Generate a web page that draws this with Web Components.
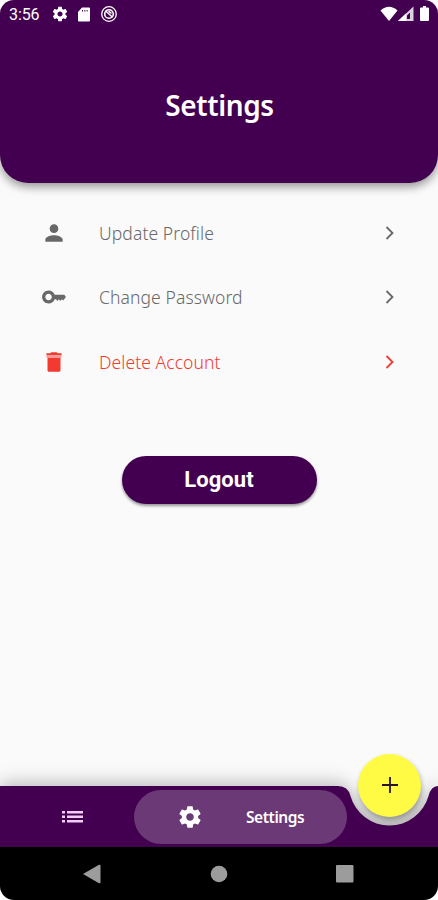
<!DOCTYPE html>
<html lang="en">
<head>
<meta charset="UTF-8">
<meta name="viewport" content="width=device-width, initial-scale=1.0">
<title>Settings</title>
<style>
  body {
    margin: 0;
    background: #fff;
  }
</style>
</head>
<body>
<phone-screen>
  <page-header slot="top">Settings</page-header>

  <settings-row icon="person" style="--spacing: 0.1px">Update Profile</settings-row>
  <settings-row icon="key" style="--spacing: 0.1px">Change Password</settings-row>
  <settings-row icon="trash" danger style="--spacing: 0.08px">Delete Account</settings-row>
  <pill-button>Logout</pill-button>

  <bottom-nav slot="bottom">Settings</bottom-nav>
  <system-nav slot="bottom"></system-nav>
</phone-screen>

<script>
const GEAR = 'M19.43 12.98c.04-.32.07-.64.07-.98s-.03-.66-.07-.98l2.11-1.65c.19-.15.24-.42.12-.64l-2-3.46c-.12-.22-.39-.3-.61-.22l-2.49 1c-.52-.4-1.08-.73-1.69-.98l-.38-2.65C14.46 2.18 14.25 2 14 2h-4c-.25 0-.46.18-.49.42l-.38 2.65c-.61.25-1.17.59-1.69.98l-2.49-1c-.23-.09-.49 0-.61.22l-2 3.46c-.13.22-.07.49.12.64l2.11 1.65c-.04.32-.07.65-.07.98s.03.66.07.98l-2.11 1.65c-.19.15-.24.42-.12.64l2 3.46c.12.22.39.3.61.22l2.49-1c.52.4 1.08.73 1.69.98l.38 2.65c.03.24.24.42.49.42h4c.25 0 .46-.18.49-.42l.38-2.65c.61-.25 1.17-.59 1.69-.98l2.49 1c.23.09.49 0 .61-.22l2-3.46c.12-.22.07-.49-.12-.64l-2.11-1.65zM12 15.5c-1.93 0-3.5-1.57-3.5-3.5s1.57-3.5 3.5-3.5 3.5 1.57 3.5 3.5-1.57 3.5-3.5 3.5z';

// Icons for the rows, all on a 24px grid
const ROW_ICONS = {
  person: '<path d="M12 12c2.21 0 4-1.79 4-4s-1.79-4-4-4-4 1.79-4 4 1.79 4 4 4zm0 2c-2.67 0-8 1.34-8 4v2h16v-2c0-2.66-5.33-4-8-4z"/>',
  key: '<path fill-rule="evenodd" d="M12.650 10C11.830 7.670 9.610 6 7 6c-3.310 0-6 2.690-6 6s2.690 6 6 6c2.610 0 4.830-1.670 5.650-4H14l1 1.800L16.600 14l1.300 1.600L19.200 14l1.300 1.300L23 12l-1.500-2h-8.850zM7 15c-1.650 0-3-1.350-3-3s1.350-3 3-3 3 1.350 3 3-1.350 3-3 3z"/>',
  trash: '<path d="M6 8v11.500c0 1 .9 1.500 1.800 1.500h8.400c.9 0 1.800-.5 1.800-1.500V8z"/><path d="M9.500 3h5l1 1H19v1.600H5V4h3.500z"/><path opacity=".5" d="M5 5.600h14V8H5z"/>'
};

class PhoneScreen extends HTMLElement {
  constructor() {
    super();
    this.attachShadow({ mode: 'open' });
  }

  connectedCallback() {
    this.shadowRoot.innerHTML = `
      <style>
        :host {
          display: flex;
          flex-direction: column;
          width: 438px;
          height: 900px;
          overflow: hidden;
          border-radius: 14px;
          background: #fafafa;
          font-family: "Noto Sans", sans-serif;
        }
        main {
          flex: 1;
          padding-top: 17.5px;
          display: flex;
          flex-direction: column;
        }
      </style>
      <slot name="top"></slot>
      <main><slot></slot></main>
      <slot name="bottom"></slot>
    `;
  }
}

class StatusBar extends HTMLElement {
  constructor() {
    super();
    this.attachShadow({ mode: 'open' });
  }

  connectedCallback() {
    this.shadowRoot.innerHTML = `
      <style>
        :host {
          display: flex;
          align-items: center;
          height: 28px;
          padding: 0 7px 0 9px;
          color: #fff;
          font: 16px/28px Roboto, sans-serif;
        }
        svg { display: block; fill: currentColor; }
        .time { width: 43px; padding-top: 1px; letter-spacing: -0.1px; }
        .left, .right { display: flex; align-items: center; }
        .left { gap: 9px; flex: 1; }
        .signal { margin-right: 3px; }
      </style>
      <span class="time">3:56</span>
      <div class="left">
        <svg width="16" height="16" viewBox="1 1 22 22"><path d="${GEAR}"/></svg>
        <svg width="14" height="15" viewBox="0 0 14 15"><path fill-rule="evenodd" d="M5 .5h7q1 0 1 1v12q0 1-1 1H2q-1 0-1-1V5zM5 3v1.500h1V3zm2.300 0v1.500h1V3zm2.300 0v1.500h1V3z"/></svg>
        <svg width="18" height="18" viewBox="0 0 18 18"><g fill="none" stroke="#fff"><circle cx="9" cy="9" r="7.300" stroke-width="1.300"/><circle cx="9" cy="9" r="4.300" stroke-width="1.600"/><path stroke-width="1.500" d="M5.500 5.700l7 6.500M8.500 6l3 2.500"/></g></svg>
      </div>
      <div class="right">
        <svg width="18" height="16" viewBox="0 0 18 16"><path d="M.5 4.500Q9-3 17.500 4.500L9 15z"/></svg>
        <svg class="signal" width="16" height="16" viewBox="0 0 16 16"><path fill-rule="evenodd" d="M0 15L15.500.5V15zM9 13h3V6.500L9 9.500z" opacity=".82"/><path d="M0 15L8 7.500V15z"/></svg>
        <svg width="14" height="16" viewBox="0 0 14 16"><path d="M6 0h3v1.500h2q1 0 1 1V14q0 1-1 1H4q-1 0-1-1V2.500q0-1 1-1h2z"/></svg>
      </div>
    `;
  }
}

class PageHeader extends HTMLElement {
  constructor() {
    super();
    this.attachShadow({ mode: 'open' });
  }

  connectedCallback() {
    this.shadowRoot.innerHTML = `
      <style>
        :host {
          display: block;
          height: 183px;
          border-radius: 0 0 28px 28px;
          background: #430050;
          color: #fff;
          box-shadow: 0 4px 10px rgba(0, 0, 0, 0.4);
        }
        h1 {
          margin: 57px 0 0;
          padding-left: 1px;
          text-align: center;
          font-size: 28px;
          font-weight: 600;
          line-height: 40px;
          letter-spacing: -0.4px;
        }
      </style>
      <status-bar></status-bar>
      <h1><slot></slot></h1>
    `;
  }
}

class SettingsRow extends HTMLElement {
  constructor() {
    super();
    this.attachShadow({ mode: 'open' });
  }

  connectedCallback() {
    this.shadowRoot.innerHTML = `
      <style>
        :host {
          display: grid;
          grid-template-columns: 26px 1fr 10px;
          column-gap: 32px;
          align-items: center;
          height: 64.5px;
          padding: 0 43px 0 41px;
          color: #686868;
        }
        :host([danger]) { color: #f23a30; }
        svg { display: block; fill: currentColor; }
        .label {
          font-size: 17.5px;
          font-weight: 350;
          line-height: 28px;
          letter-spacing: var(--spacing);
        }
        .chevron { fill: none; stroke: currentColor; stroke-width: 1.8; }
      </style>
      <svg width="26" height="26" viewBox="0 0 24 24">${ROW_ICONS[this.getAttribute('icon')]}</svg>
      <span class="label"><slot></slot></span>
      <svg class="chevron" width="10" height="14" viewBox="0 0 10 14"><path d="M1.500 1l6 6-6 6"/></svg>
    `;
  }
}

class PillButton extends HTMLElement {
  constructor() {
    super();
    this.attachShadow({ mode: 'open' });
  }

  connectedCallback() {
    this.shadowRoot.innerHTML = `
      <style>
        :host { display: flex; justify-content: center; margin-top: 61.5px; }
        button {
          width: 195px;
          height: 48px;
          padding: 0;
          border: 0;
          border-radius: 24px;
          background: #430050;
          color: #fff;
          font: bold 22px/46px Roboto, sans-serif;
          letter-spacing: 0.1px;
          box-shadow: 0 2px 3px rgba(0, 0, 0, 0.4);
        }
      </style>
      <button><slot></slot></button>
    `;
  }
}

class BottomNav extends HTMLElement {
  constructor() {
    super();
    this.attachShadow({ mode: 'open' });
  }

  connectedCallback() {
    this.shadowRoot.innerHTML = `
      <style>
        :host { display: block; position: relative; height: 61px; color: #fff; }
        svg { display: block; }
        /* bar with the notch, drawn behind the items */
        .bar {
          position: absolute;
          left: 0;
          top: 0;
          overflow: visible;
        }
        .shape { filter: drop-shadow(0 -3px 9px rgba(0, 0, 0, 0.26)); }
        nav {
          position: relative;
          display: flex;
          align-items: center;
          height: 61px;
          padding-left: 62px;
        }
        .active {
          display: flex;
          align-items: center;
          box-sizing: border-box;
          width: 213px;
          height: 54px;
          margin-left: 51px;
          padding-left: 43px;
          border-radius: 27px;
          background: #6b3a76;
        }
        .label {
          margin-left: 43px;
          font-size: 15.5px;
          font-weight: 600;
          letter-spacing: -0.45px;
        }
        .fab {
          position: absolute;
          left: 358px;
          top: -32.5px;
          width: 63px;
          height: 63px;
          padding: 0;
          border: 0;
          border-radius: 50%;
          background: #fffb45;
          display: grid;
          place-items: center;
          box-shadow: 1px 3px 5px rgba(0, 0, 0, 0.3);
        }
      </style>
      <svg class="bar" width="438" height="61" viewBox="0 0 438 61">
        <defs>
          <linearGradient id="shade" x1="0" y1="0" x2="0" y2="1">
            <stop offset="0" stop-color="#000" stop-opacity="0"/>
            <stop offset="1" stop-color="#000" stop-opacity=".1"/>
          </linearGradient>
        </defs>
        <path class="shape" fill="#430050" d="M0 0H338Q348 0 350.500 10A40.500 40.500 0 0 0 428.500 10Q431 0 438 0V61H0z"/>
        <!-- shade inside the notch -->
        <path fill="url(#shade)" d="M338 0Q348 0 350.500 10A40.500 40.500 0 0 0 428.500 10Q431 0 438 0z"/>
      </svg>
      <nav>
        <svg width="21" height="14" viewBox="0 0 21 14" fill="#f0cdf2">
          <path d="M0 1h3v2.500H0zM5 1h16v2.500H5zM0 5.500h3V8H0zM5 5.500h16V8H5zM0 10h3v2.500H0zM5 10h16v2.500H5z"/>
        </svg>
        <div class="active">
          <svg width="26" height="26" viewBox="0 0 24 24" fill="#fff"><path d="${GEAR}"/></svg>
          <span class="label"><slot></slot></span>
        </div>
      </nav>
      <button class="fab" aria-label="Add">
        <svg width="16" height="16" viewBox="0 0 16 16" stroke="#29122e" stroke-width="1.800"><path d="M8 0v16M0 8h16"/></svg>
      </button>
    `;
  }
}

class SystemNav extends HTMLElement {
  constructor() {
    super();
    this.attachShadow({ mode: 'open' });
  }

  connectedCallback() {
    this.shadowRoot.innerHTML = `
      <style>
        :host {
          display: flex;
          justify-content: space-between;
          align-items: center;
          height: 53px;
          padding: 0 84px 0 83px;
          background: #000;
          position: relative;
        }
        svg { display: block; fill: #9c9c9c; }
      </style>
      <svg width="18" height="20" viewBox="0 0 18 20"><path d="M0 10L16 .8q1.500-.5 1.500 1v16.400q0 1.500-1.500 1z"/></svg>
      <svg width="18" height="18" viewBox="0 0 18 18"><circle cx="9" cy="9" r="8.300"/></svg>
      <svg width="18" height="18" viewBox="0 0 18 18"><rect width="17.500" height="17.500" rx="1"/></svg>
    `;
  }
}

customElements.define('phone-screen', PhoneScreen);
customElements.define('status-bar', StatusBar);
customElements.define('page-header', PageHeader);
customElements.define('settings-row', SettingsRow);
customElements.define('pill-button', PillButton);
customElements.define('bottom-nav', BottomNav);
customElements.define('system-nav', SystemNav);
</script>
</body>
</html>
